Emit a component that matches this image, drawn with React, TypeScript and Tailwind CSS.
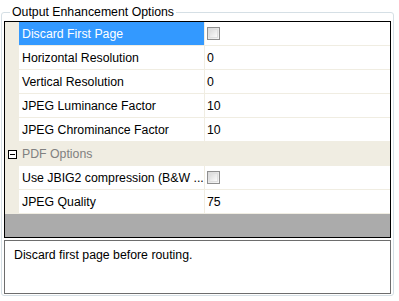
import React from "react";

const F = { fontFamily: '"Liberation Sans", Arial, sans-serif' };

function Check() {
  return (
    <div className="w-[13px] h-[13px] border border-[#8f8f8f] bg-gradient-to-br from-[#d8d8d8] to-[#f8f8f8] p-[1px]">
      <div className="w-full h-full border border-[#e0e0e0] bg-gradient-to-br from-[#dcdcdc] to-[#fbfbfb]" />
    </div>
  );
}

function Row({ name, value, selected }: { name: string; value: React.ReactNode; selected?: boolean }) {
  return (
    <div className="flex h-[24px]">
      <div className="w-[14px] bg-[#f0ede2] shrink-0" />
      <div
        className={`w-[185px] shrink-0 border-b border-[#f0ede2] pl-[3px] flex items-center ${
          selected ? "bg-[#3399ff] text-white" : "bg-white text-black"
        }`}
      >
        <span className="whitespace-nowrap">{name}</span>
      </div>
      <div className="w-[1px] bg-[#f0ede2] shrink-0" />
      <div className="flex-1 border-b border-[#f0ede2] bg-white pl-[2px] flex items-center text-black">{value}</div>
    </div>
  );
}

export default function App() {
  return (
    <div className="w-[399px] h-[301px] bg-white relative text-[12.3px] leading-[16px]" style={F}>
      <fieldset className="absolute left-[1px] top-[4px] w-[393px] h-[292px] border border-[#d5dfe5] rounded-[3px] px-[2px] pb-[1px] flex flex-col">
        <legend className="ml-[6px] px-[2px] text-black">Output Enhancement Options</legend>
        <div className="border border-black mt-[1px] flex flex-col bg-[#ababab]">
          <Row name="Discard First Page" value={<Check />} selected />
          <Row name="Horizontal Resolution" value="0" />
          <Row name="Vertical Resolution" value="0" />
          <Row name="JPEG Luminance Factor" value="10" />
          <Row name="JPEG Chrominance Factor" value="10" />
          <div className="flex h-[24px] bg-[#f0ede2] items-center">
            <div className="w-[14px] flex justify-center shrink-0">
              <div className="w-[9px] h-[9px] border border-black bg-white flex items-center justify-center">
                <div className="w-[5px] h-[1px] bg-black" />
              </div>
            </div>
            <span className="pl-[3px] text-[#808080]">PDF Options</span>
          </div>
          <Row name="Use JBIG2 compression (B&W ..." value={<Check />} />
          <Row name="JPEG Quality" value="75" />
          <div className="h-[23px]" />
        </div>
        <div className="mt-[2px] h-[54px] border border-[#6d6d6d] bg-white pl-[9px] pt-[6px] text-black">
          Discard first page before routing.
        </div>
      </fieldset>
    </div>
  );
}
